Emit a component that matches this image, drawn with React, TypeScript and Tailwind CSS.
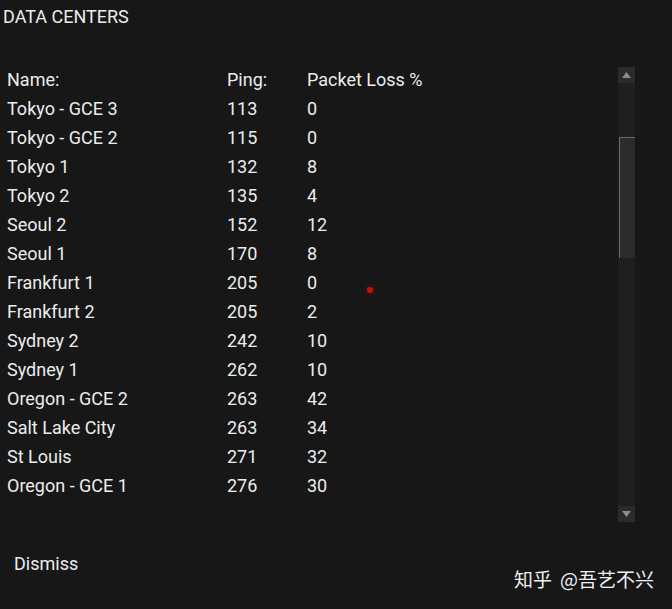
const rows: [string, number, number][] = [
  ['Tokyo - GCE 3', 113, 0],
  ['Tokyo - GCE 2', 115, 0],
  ['Tokyo 1', 132, 8],
  ['Tokyo 2', 135, 4],
  ['Seoul 2', 152, 12],
  ['Seoul 1', 170, 8],
  ['Frankfurt 1', 205, 0],
  ['Frankfurt 2', 205, 2],
  ['Sydney 2', 242, 10],
  ['Sydney 1', 262, 10],
  ['Oregon - GCE 2', 263, 42],
  ['Salt Lake City', 263, 34],
  ['St Louis', 271, 32],
  ['Oregon - GCE 1', 276, 30],
]

export default function App() {
  return (
    <div
      className="relative w-[672px] h-[609px] bg-[#171717] text-[#ececec] overflow-hidden"
      style={{ fontFamily: 'Roboto, "Noto Sans", sans-serif' }}
    >
      <h1 className="pl-[3px] pt-[6px] text-[18px] leading-[22px]">DATA CENTERS</h1>

      <div className="flex mt-[35px]">
        <div className="w-[612px] pl-[7px] pt-[2px] text-[18px]">
          <div className="flex h-[29px] items-center">
            <span className="w-[220px]">Name:</span>
            <span className="w-[80px]">Ping:</span>
            <span>Packet Loss %</span>
          </div>
          {rows.map(([name, ping, loss]) => (
            <div key={name} className="flex h-[29px] items-center">
              <span className="w-[220px]">{name}</span>
              <span className="w-[80px]">{ping}</span>
              <span>{loss}</span>
            </div>
          ))}
        </div>

        <div className="ml-[6px] mt-[4px] w-[17px] h-[455px] bg-[#1f1f1f] flex flex-col">
          <div className="h-[16px] bg-[#2b2b2b] flex items-center justify-center">
            <svg width="9" height="6" viewBox="0 0 9 6"><path d="M0 6 L4.5 0 L9 6 Z" fill="#8a8a8a" /></svg>
          </div>
          <div className="flex-1 relative">
            <div className="absolute left-[1px] right-0 top-[54px] h-[121px] bg-[#2c2c2c] border-l border-t border-[#6a6a6a]" />
          </div>
          <div className="h-[16px] bg-[#2b2b2b] flex items-center justify-center">
            <svg width="9" height="6" viewBox="0 0 9 6"><path d="M0 0 L4.5 6 L9 0 Z" fill="#8a8a8a" /></svg>
          </div>
        </div>
      </div>

      <div className="absolute left-[367px] top-[287px] w-[6px] h-[6px] rounded-full bg-[#c01010] shadow-[0_0_4px_#a00]" />

      <div className="flex items-start justify-between mt-[28px] pl-[14px] pr-[18px]">
        <span className="text-[18px] leading-[28px]">Dismiss</span>
        <span
          className="text-[19px] leading-[28px] mt-[15px] text-[#f0f0f0]"
          style={{ fontFamily: '"Noto Sans CJK SC", sans-serif' }}
        >
          知乎<span className="ml-[8px]">@吾艺不兴</span>
        </span>
      </div>
    </div>
  )
}
